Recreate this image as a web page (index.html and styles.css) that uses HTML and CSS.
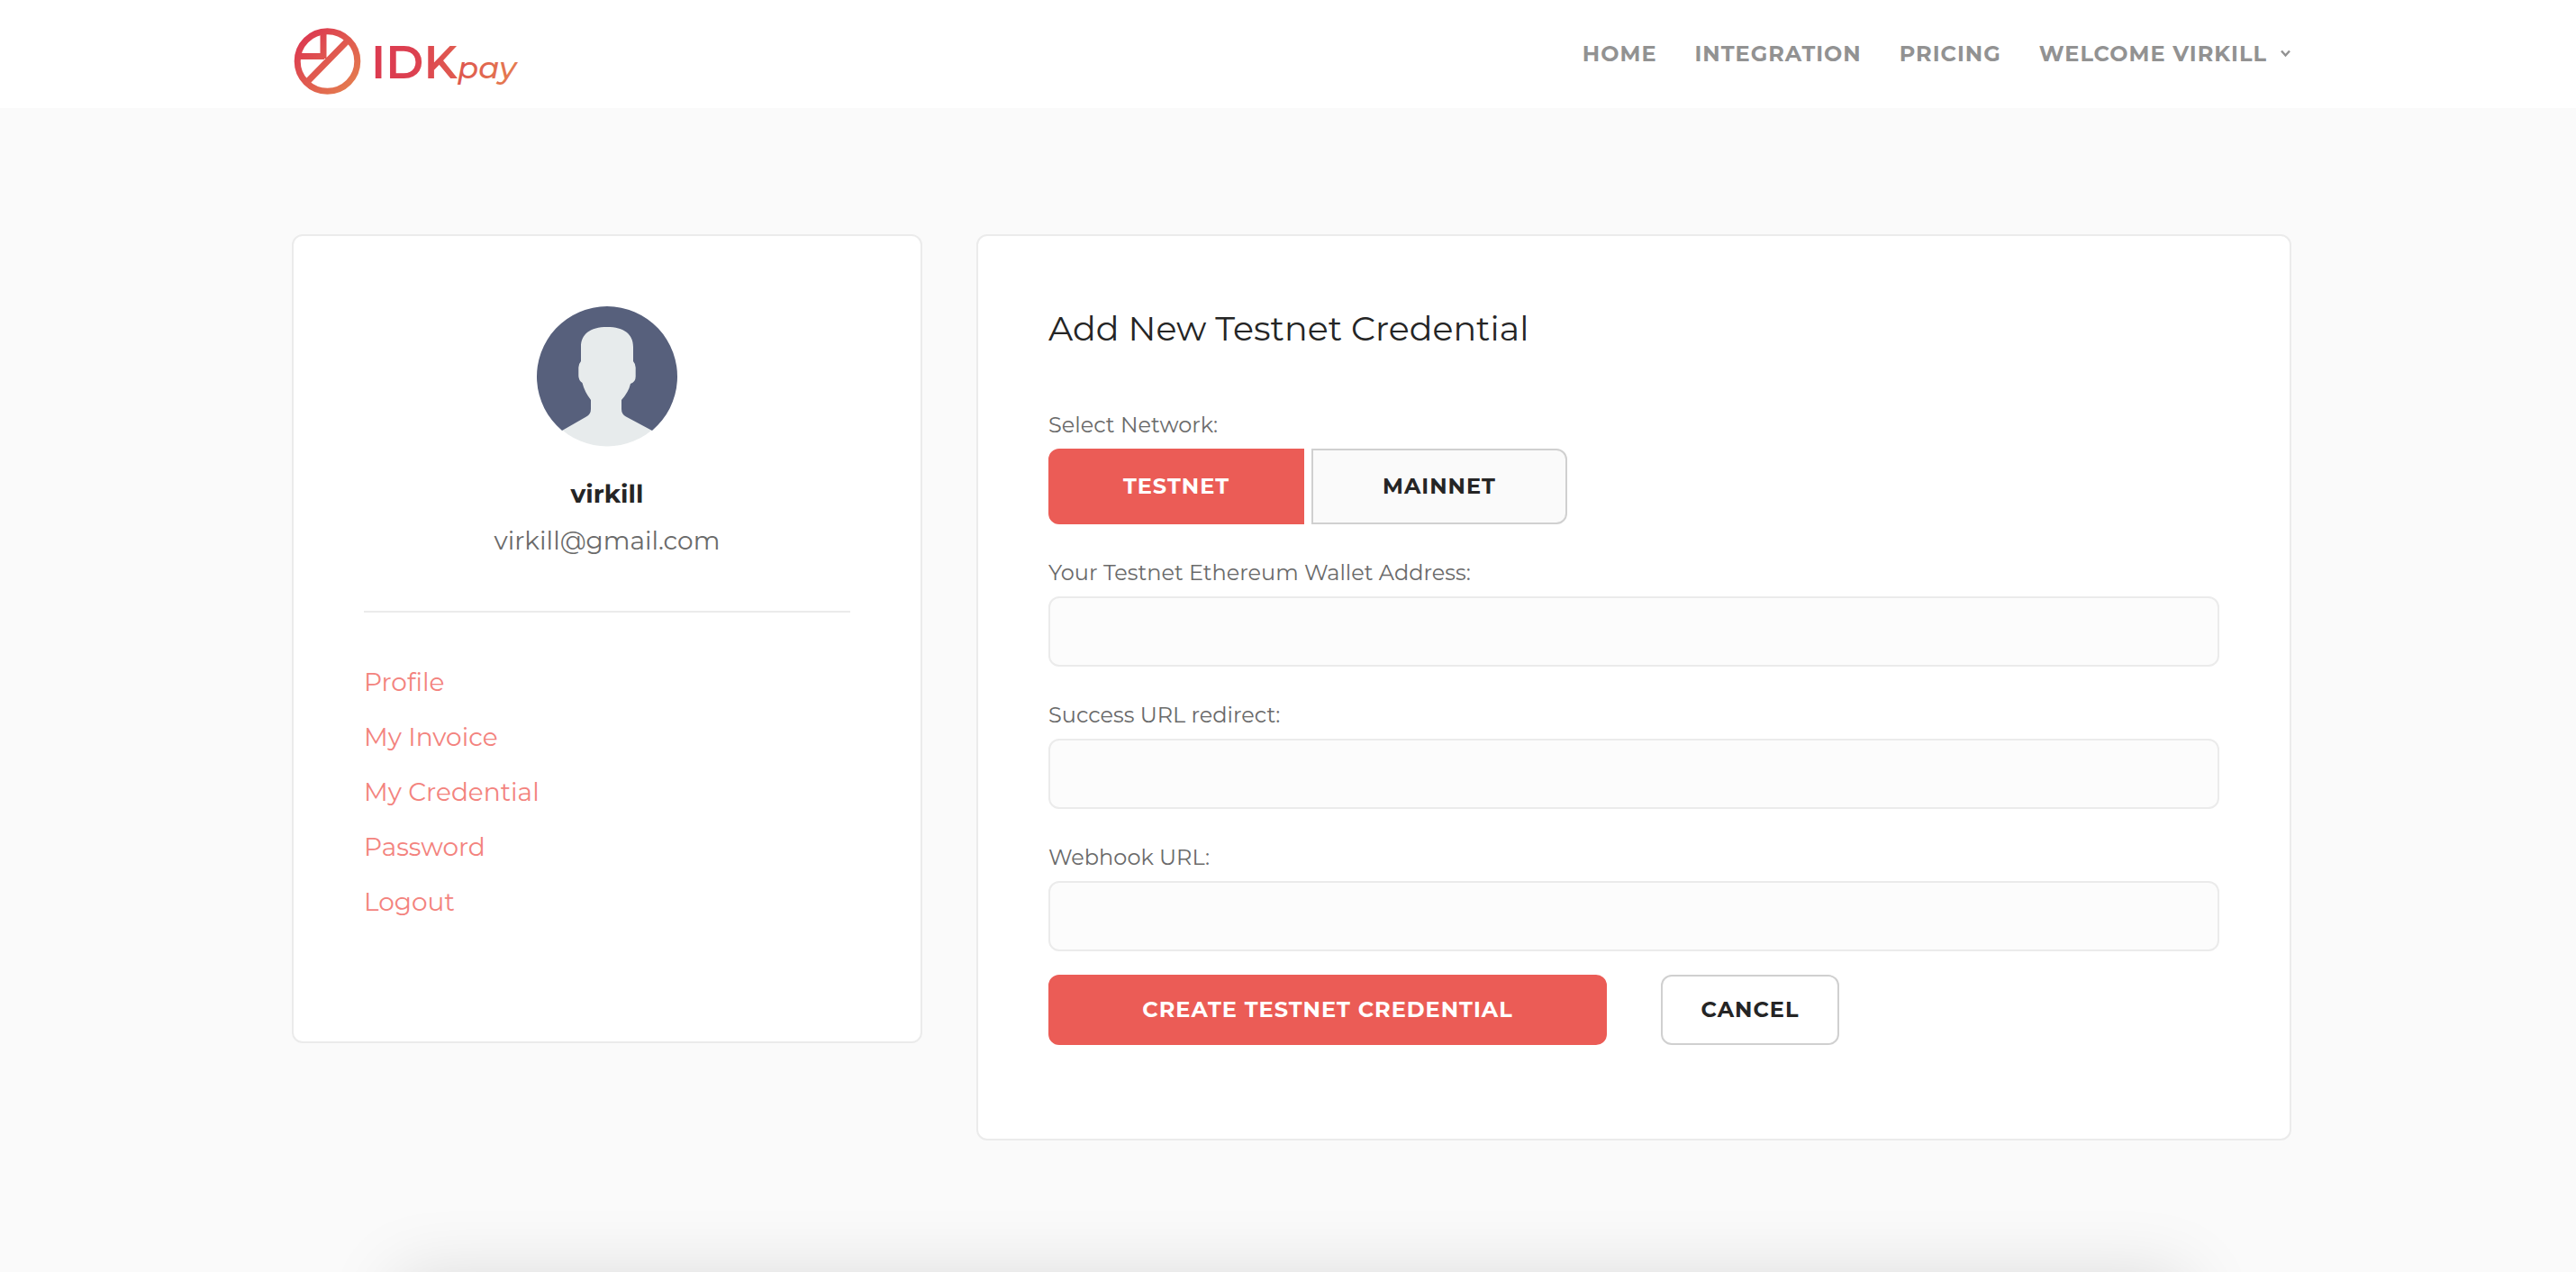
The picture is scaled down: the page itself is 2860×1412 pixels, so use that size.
FILE: index.html
```html
<!DOCTYPE html>
<html lang="en">
<head>
<meta charset="utf-8">
<meta name="viewport" content="width=device-width, initial-scale=1">
<title>IDKpay - Add New Testnet Credential</title>
<link rel="stylesheet" href="styles.css">
</head>
<body>
<div class="page">
  <header class="header">
    <div class="container header-inner">
      <a class="logo" href="#" aria-label="IDKpay">
        <svg width="256" height="88" viewBox="0 0 256 88">
          <defs>
            <linearGradient id="mark" gradientUnits="userSpaceOnUse" x1="14" y1="18" x2="66" y2="70">
              <stop offset="0" stop-color="#dc3b50"/><stop offset="1" stop-color="#e4794f"/>
            </linearGradient>
            <linearGradient id="idk" gradientUnits="userSpaceOnUse" x1="92" y1="0" x2="180" y2="0">
              <stop offset="0" stop-color="#dc3b50"/><stop offset="0.5" stop-color="#dc4050"/><stop offset="1" stop-color="#e05a50"/>
            </linearGradient>
            <linearGradient id="pay" gradientUnits="userSpaceOnUse" x1="183" y1="50" x2="250" y2="70">
              <stop offset="0" stop-color="#dd554f"/><stop offset="1" stop-color="#e67f50"/>
            </linearGradient>
          </defs>
          <g fill="none" stroke="url(#mark)" stroke-width="7">
            <circle cx="39.500" cy="44" r="33.300"/>
            <path d="M35 12V41M6 38.600H36M18 66L62 21"/>
          </g>
          <text class="logo-idk" x="88" y="63" fill="url(#idk)">IDK</text>
          <text class="logo-pay" x="184" y="63" fill="url(#pay)">pay</text>
        </svg>
      </a>
      <nav class="nav">
        <a href="#">HOME</a>
        <a href="#">INTEGRATION</a>
        <a href="#">PRICING</a>
        <a class="nav-user" href="#">WELCOME VIRKILL
          <svg width="13" height="10" viewBox="0 0 13 10" aria-hidden="true"><path d="M2 1.500L6.500 6.500L11 1.500" fill="none" stroke="currentColor" stroke-width="2.400"/></svg>
        </a>
      </nav>
    </div>
  </header>

  <main class="container main">
    <aside class="card sidebar">
      <svg class="avatar" width="156" height="156" viewBox="0 0 156 156" aria-hidden="true">
        <circle cx="78" cy="78" r="77.500" fill="#e7ebec"/>
        <path fill="#57607c" fill-rule="evenodd" d="M28 137.900A78 78 0 1 1 128 137.900L99 122.500Q94 120 94 114V104Q102 95 104 86Q109.700 84 109.700 78V68Q109.700 64 107 61V45C107 31 97 23 78 23C59 23 49 31 49 45V61Q46.300 64 46.300 68V77Q46.300 82 50.500 85Q53 95 60 104V114Q60 120 55 122.500Z"/>
      </svg>
      <p class="user-name">virkill</p>
      <p class="user-email">virkill@gmail.com</p>
      <hr class="divider">
      <ul class="menu">
        <li><a href="#">Profile</a></li>
        <li><a href="#">My Invoice</a></li>
        <li><a href="#">My Credential</a></li>
        <li><a href="#">Password</a></li>
        <li><a href="#">Logout</a></li>
      </ul>
    </aside>

    <section class="card content">
      <h1 class="title">Add New Testnet Credential</h1>
      <form class="form">
        <div class="field">
          <span class="label" id="network-label">Select Network:</span>
          <div class="switch" role="group" aria-labelledby="network-label">
            <button class="btn btn-switch btn-primary" type="button">TESTNET</button>
            <button class="btn btn-switch btn-muted" type="button">MAINNET</button>
          </div>
        </div>
        <div class="field">
          <label class="label" for="wallet">Your Testnet Ethereum Wallet Address:</label>
          <input class="input" id="wallet" type="text">
        </div>
        <div class="field">
          <label class="label" for="success">Success URL redirect:</label>
          <input class="input" id="success" type="text">
        </div>
        <div class="field">
          <label class="label" for="webhook">Webhook URL:</label>
          <input class="input" id="webhook" type="text">
        </div>
        <div class="actions">
          <button class="btn btn-primary btn-create" type="submit">CREATE TESTNET CREDENTIAL</button>
          <button class="btn btn-cancel" type="button">CANCEL</button>
        </div>
      </form>
    </section>
  </main>

  <div class="container footer">
    <div class="footer-panel"></div>
  </div>
</div>
</body>
</html>
```
FILE: styles.css
```css
* { box-sizing: border-box; }

body {
  margin: 0;
  background: #fafafa;
  color: #252525;
  font-family: Montserrat, Inter, "Liberation Sans", sans-serif;
}

a { color: inherit; text-decoration: none; }
p, h1, ul { margin: 0; padding: 0; }

.page { min-height: 100vh; overflow: hidden; }

.container {
  max-width: 2228px;
  margin: 0 auto;
  padding-left: 8px;
}

.header { background: #fff; }
.header-inner {
  display: flex;
  justify-content: space-between;
  height: 120px;
}
.logo { display: block; padding-top: 24px; }
.logo svg { display: block; }
.logo-idk { font-size: 51px; font-weight: 600; }
.logo-pay { font-size: 34px; font-style: italic; font-weight: 500; }

.nav {
  display: flex;
  align-items: flex-start;
  gap: 42px;
  padding-top: 42px;
  color: #929292;
  font-size: 24px;
  font-weight: 700;
  line-height: 36px;
  letter-spacing: 1px;
}
.nav-user { display: flex; align-items: center; gap: 14px; }

.main {
  display: grid;
  grid-template-columns: 700fr 1460fr;
  gap: 60px;
  align-items: start;
  padding-top: 140px;
  padding-bottom: 146px;
}

.card {
  background: #fff;
  border: 2px solid #ebebeb;
  border-radius: 12px;
  padding: 78px;
}
.sidebar { padding-bottom: 135px; text-align: center; font-size: 28px; line-height: 40px; }
.avatar { display: block; margin: 0 auto 32px; }
.user-name { font-weight: 700; margin-bottom: 12px; }
.user-email { color: #6a6a6a; }
.divider { margin: 58px 0 57px; border: 0; border-top: 2px solid #ebebeb; }
.menu {
  display: grid;
  gap: 21px;
  list-style: none;
  color: #f3837e;
  text-align: left;
}

.content { padding-bottom: 104px; }
.title { padding-top: 1px; margin-bottom: 65px; font-size: 38px; font-weight: 400; line-height: 48px; }
.field { margin-bottom: 36px; }
.field:nth-last-child(2) { margin-bottom: 26px; }
.label {
  display: block;
  margin-bottom: 8px;
  color: #6a6a6a;
  font-size: 24px;
  line-height: 36px;
}
.input {
  display: block;
  width: 100%;
  height: 78px;
  padding: 0 24px;
  border: 2px solid #ebebeb;
  border-radius: 12px;
  background: #fcfcfc;
  color: inherit;
  font: inherit;
  font-size: 24px;
}

.btn {
  height: 78px;
  padding: 0 0 2px;
  border: 2px solid #d0d0d0;
  border-radius: 12px;
  background: #fff;
  color: #252525;
  font-family: inherit;
  font-size: 24px;
  font-weight: 700;
  letter-spacing: 1px;
}
.btn-primary { border-color: #eb5c56; background: #eb5c56; color: #fff; }
.btn-muted { background: #fafafa; }
.switch { display: flex; gap: 8px; }
.btn-switch { width: 284px; height: 84px; }
.btn-switch:first-child { border-radius: 12px 0 0 12px; }
.btn-switch:last-child { border-radius: 0 12px 12px 0; }
.actions { display: flex; gap: 60px; }
.btn-create { width: 620px; }
.btn-cancel { width: 198px; }

/* Zero-height row: only the panel's soft shadow reaches up into view */
.footer { height: 0; padding: 4px 116px 0 124px; }
.footer-panel {
  height: 200px;
  box-shadow: 0 0 80px rgba(0, 0, 0, 0.13);
}
```
